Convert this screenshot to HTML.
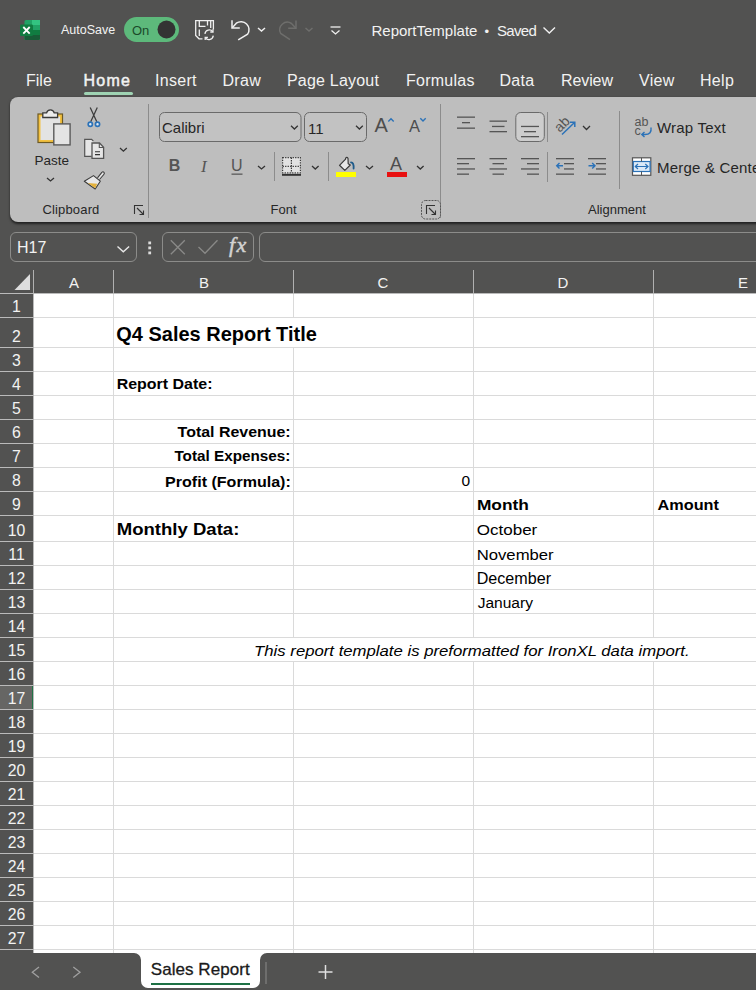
<!DOCTYPE html>
<html><head><meta charset="utf-8">
<style>
*{box-sizing:border-box;margin:0;padding:0}
html,body{width:756px;height:990px;overflow:hidden;background:#525251;font-family:"Liberation Sans",sans-serif}
.a{position:absolute;white-space:nowrap;line-height:1}
.w{color:#f2f2f2}
.k{color:#262626}
svg{position:absolute;overflow:visible}
#sheet{position:absolute;left:34px;top:294px;width:722px;height:659px;background:#fff}
.hl{position:absolute;height:1px;background:#dadada}
.vl{position:absolute;width:1px;background:#dadada}
.rh{position:absolute;left:0;width:33px;text-align:center;color:#f2f2f2;font-size:15px;line-height:1}
.rs{position:absolute;left:0;width:33px;height:1px;background:#bababa}
.c{position:absolute;white-space:nowrap;line-height:1;color:#000;font-size:15.2px;transform-origin:0 0}
.b{font-weight:bold}
</style></head><body>
<!-- TITLE BAR -->
<div id="title">
<svg style="left:0;top:0" width="756" height="60">
 <!-- excel icon -->
 <g>
  <rect x="24.5" y="20" width="15.5" height="20" rx="1.5" fill="#21a366"/>
  <rect x="32" y="20" width="8" height="5" fill="#33c481"/>
  <rect x="24.5" y="25" width="15.5" height="5" fill="#21a366"/>
  <rect x="24.5" y="30" width="15.5" height="5" fill="#107c41"/>
  <path d="M24.5 35 H40 V38.5 Q40 40 38.5 40 H26 Q24.5 40 24.5 38.5Z" fill="#185c37"/>
  <rect x="20" y="24.5" width="13" height="11.5" rx="1.3" fill="#107c41"/>
  <path d="M23.3 27 L29.7 33.6 M29.7 27 L23.3 33.6" stroke="#fff" stroke-width="1.8"/>
 </g>
 <!-- toggle -->
 <rect x="124" y="17" width="55" height="25" rx="12.5" fill="#5db97b"/>
 <circle cx="166.5" cy="29.5" r="9" fill="#333333"/>
 <!-- save icon -->
 <g fill="none" stroke="#f0f0f0" stroke-width="1.3">
  <path d="M202.5 38.8 H199 L195.7 35.5 V20.7 H213.4 V29.5"/>
  <path d="M199.3 20.7 V26.3 H205.5"/>
  <path d="M207.5 20.7 V25.5"/>
  <path d="M210.7 20.7 V28"/>
  <path d="M199.3 29.5 V36"/>
  <path d="M204.9 33.8 A4.5 4.5 0 0 1 212.8 31.6 M213.3 35.6 A4.5 4.5 0 0 1 205.4 37.9"/>
  <path d="M213 29.3 V32 H210.3 M205.2 40 V37.4 H207.9"/>
 </g>
 <!-- undo -->
 <g fill="none" stroke="#f0f0f0" stroke-width="1.5">
  <path d="M232 20.3 V28 H239.8"/>
  <path d="M232.3 27.8 L236.3 23.2 A8 8 0 0 1 247.6 34.2 L238.2 39.8"/>
  <path d="M258 28 L261.5 31 L265 28"/>
 </g>
 <!-- redo greyed -->
 <g fill="none" stroke="#6e6e6c" stroke-width="1.5">
  <path d="M296 20.5 V28.2 H288.2"/>
  <path d="M295.7 28 L291.5 23.5 A7.6 7.6 0 0 0 280.7 33.5 L290 39.6"/>
  <path d="M305.5 28 L309 31 L312.5 28"/>
 </g>
 <!-- customize -->
 <g fill="none" stroke="#f0f0f0" stroke-width="1.3">
  <path d="M330.5 27 H340.5"/>
  <path d="M331.5 30.5 L335.5 34 L339.5 30.5"/>
 </g>
 <!-- saved chevron -->
 <path d="M543.5 27.5 L549.3 33 L555 27.5" fill="none" stroke="#f0f0f0" stroke-width="1.4"/>
</svg>
<div class="a w" style="left:61px;top:24.3px;font-size:12.5px">AutoSave</div>
<div class="a" style="left:132px;top:24.2px;font-size:13px;color:#1b4a2a">On</div>
<div class="a w" style="left:371.5px;top:23.1px;font-size:15px">ReportTemplate</div>
<div class="a w" style="left:484.5px;top:25px;font-size:13px">&#8226;</div>
<div class="a w" style="left:497px;top:23.1px;font-size:15px;letter-spacing:-0.7px">Saved</div>
</div>
<!-- TABS -->
<div id="tabs">
<div class="a w" style="left:26px;top:72.9px;font-size:16px">File</div>
<div class="a w" style="left:83.6px;top:72.9px;font-size:16px;letter-spacing:1.2px;-webkit-text-stroke:0.5px #f2f2f2">Home</div>
<div class="a" style="left:84px;top:92px;width:49px;height:3px;border-radius:1.5px;background:#9fd3b3"></div>
<div class="a w" style="left:155px;top:72.9px;font-size:16px;letter-spacing:0.3px">Insert</div>
<div class="a w" style="left:222.5px;top:72.9px;font-size:16px;letter-spacing:0.3px">Draw</div>
<div class="a w" style="left:287px;top:72.9px;font-size:16px;letter-spacing:0.2px">Page Layout</div>
<div class="a w" style="left:406px;top:72.9px;font-size:16px;letter-spacing:0.25px">Formulas</div>
<div class="a w" style="left:499.5px;top:72.9px;font-size:16px;letter-spacing:0.25px">Data</div>
<div class="a w" style="left:561px;top:72.9px;font-size:16px;letter-spacing:-0.1px">Review</div>
<div class="a w" style="left:639px;top:72.9px;font-size:16px;letter-spacing:0.3px">View</div>
<div class="a w" style="left:700px;top:72.9px;font-size:16px;letter-spacing:0.3px">Help</div>
</div>
<!-- RIBBON -->
<div id="ribbon" style="position:absolute;left:10px;top:97px;width:800px;height:125px;background:#bebebe;border-radius:8px;box-shadow:0 1.5px 2.5px rgba(0,0,0,0.6)"></div>
<svg style="left:0;top:0" width="756" height="230">
 <!-- separators -->
 <g fill="#8c8c8c">
  <rect x="148" y="104" width="1" height="114"/>
  <rect x="440" y="104" width="1" height="114"/>
  <rect x="619" y="111" width="1" height="78"/>
  <rect x="274" y="152" width="1" height="29"/>
  <rect x="328" y="152" width="1" height="29"/>
  <rect x="547" y="112" width="1" height="30"/>
  <rect x="547" y="152" width="1" height="30"/>
 </g>
 <!-- paste -->
 <rect x="38" y="114" width="24.5" height="28.5" fill="#f3c140" stroke="#6e5a24" stroke-width="1.2"/>
 <rect x="40.5" y="116.5" width="19.5" height="23.5" fill="#e3e3e3"/>
 <path d="M42.8 117.5 V112.8 H46.6 A3.9 3.9 0 0 1 54.2 112.8 H57.6 V117.5 Z" fill="#ececec" stroke="#3a3a3a" stroke-width="1.3"/>
 <rect x="53.8" y="123.9" width="16.3" height="21" fill="#e4e4e4" stroke="#5a5a5a" stroke-width="1.4"/>
 <path d="M47 178 L50.5 181 L54 178" fill="none" stroke="#333" stroke-width="1.3"/>
 <!-- scissors -->
 <path d="M90.2 107.5 L96.8 121.8 M97.3 107.5 L90.7 121.8" stroke="#3c3c3c" stroke-width="1.25" fill="none"/>
 <circle cx="90.3" cy="124.3" r="2.1" fill="#dfe9f3" stroke="#2b72b8" stroke-width="1.7"/>
 <circle cx="97.5" cy="124.3" r="2.1" fill="#dfe9f3" stroke="#2b72b8" stroke-width="1.7"/>
 <!-- copy -->
 <path d="M91.5 156.3 H84.7 V139.3 H91.6 L93.4 141.2" fill="#e6e6e6" stroke="#555" stroke-width="1.2"/>
 <path d="M92 143 H99.5 L103.6 147.2 V158.3 H92 Z" fill="#e6e6e6" stroke="#555" stroke-width="1.3"/>
 <path d="M99.3 143 V147.5 H103.6" fill="none" stroke="#555" stroke-width="1.1"/>
 <path d="M95 151.8 H100 M95 154.6 H100" stroke="#333" stroke-width="1.1"/>
 <path d="M120 148 L123.4 151.2 L126.8 148" fill="none" stroke="#333" stroke-width="1.3"/>
 <!-- format painter -->
 <path d="M97.5 177.8 L101.8 172.3 Q103 171.3 104 172.3 Q104.8 173.3 103.8 174.5 L99.5 179.5" fill="#e6e6e6" stroke="#3c3c3c" stroke-width="1.1"/>
 <path d="M84.3 181.3 L93.5 175.6 L100.3 181.2 L95.2 189 Z" fill="#e8e8e8" stroke="#3c3c3c" stroke-width="1.1" stroke-linejoin="round"/>
 <path d="M87.8 183 L97.2 183.8 L95.2 188.2 Z" fill="#e3b13c"/>
 <!-- dialog launchers -->
 <g fill="none" stroke="#333" stroke-width="1.1">
  <path d="M134.5 214 V205.5 H143"/><path d="M137 208 L143.5 214.5 M143.5 210.5 V214.5 H139.5"/>
  <path d="M426.5 214 V205.5 H435"/><path d="M429 208 L435.5 214.5 M435.5 210.5 V214.5 H431.5"/>
 </g>
 <rect x="421.5" y="200.5" width="19" height="18.5" rx="4" fill="none" stroke="#555" stroke-width="1" stroke-dasharray="2 1"/>
 <!-- font name box -->
 <rect x="159.5" y="112.5" width="141.5" height="29" rx="5" fill="#c2c2c2" stroke="#6a6a6a" stroke-width="1"/>
 <path d="M291 125.8 L294.4 129 L297.8 125.8" fill="none" stroke="#333" stroke-width="1.3"/>
 <rect x="304.5" y="112.5" width="62" height="29" rx="5" fill="#c2c2c2" stroke="#6a6a6a" stroke-width="1"/>
 <path d="M356 125.8 L359.4 129 L362.8 125.8" fill="none" stroke="#333" stroke-width="1.3"/>
 <!-- grow/shrink carets -->
 <path d="M388.3 121.5 L391 118.8 L393.7 121.5" fill="none" stroke="#2b72b8" stroke-width="1.4"/>
 <path d="M420.3 118.3 L423 121 L425.7 118.3" fill="none" stroke="#2b72b8" stroke-width="1.4"/>
 <!-- underline chevrons -->
 <g fill="none" stroke="#333" stroke-width="1.3">
  <path d="M258 166 L261.5 169 L265 166"/>
  <path d="M312 166 L315.3 169 L318.6 166"/>
  <path d="M366 166 L369.5 169 L373 166"/>
  <path d="M417 166 L420.3 169 L423.6 166"/>
  <path d="M583 126 L586.5 129.5 L590 126"/>
 </g>
 <!-- underline U -->
 <rect x="231.5" y="173.5" width="11" height="1.3" fill="#5a5a5a"/>
 <!-- borders icon -->
 <rect x="282.5" y="157.5" width="18" height="15.5" fill="#e2e2e2"/>
 <g stroke="#3a3a3a" stroke-width="1.2" stroke-dasharray="1.3 1.2" fill="none">
  <rect x="282.6" y="157.6" width="17.8" height="15.2"/>
  <path d="M291.4 157.6 V172.8 M282.6 166.3 H300.4"/>
 </g>
 <rect x="282" y="174" width="19" height="1.8" fill="#333"/>
 <!-- fill color -->
 <path d="M339.5 165.3 L345.6 159.2 V158.3 Q346.8 156.4 348 158.3 L348.2 163.8 L350.3 165 L344.8 170.4 Z" fill="#e8e8e8" stroke="#3a3a3a" stroke-width="1.2" stroke-linejoin="round"/>
 <path d="M351 162.3 Q354 162.5 353.6 168.5" fill="none" stroke="#1f5b8a" stroke-width="1.8" stroke-linecap="round"/>
 <rect x="336" y="172" width="20" height="5" fill="#ffff00"/>
 <!-- font color bar -->
 <rect x="387" y="172" width="20" height="5" fill="#e81010"/>
 <!-- alignment lines -->
 <g fill="#555">
  <rect x="457" y="116.5" width="18" height="1.3"/><rect x="462" y="122" width="8" height="1.3"/><rect x="457" y="127.5" width="18" height="1.3"/>
  <rect x="489.5" y="120.5" width="17.5" height="1.3"/><rect x="492" y="125.8" width="12.5" height="1.3"/><rect x="489.5" y="131" width="17.5" height="1.3"/>
  <rect x="521" y="125.8" width="18" height="1.3"/><rect x="524" y="131" width="12" height="1.3"/><rect x="521" y="136" width="18" height="1.3"/>
  <rect x="457" y="158" width="18" height="1.3"/><rect x="457" y="163" width="12" height="1.3"/><rect x="457" y="168.3" width="18" height="1.3"/><rect x="457" y="173.5" width="12" height="1.3"/>
  <rect x="489.5" y="158" width="17.5" height="1.3"/><rect x="492.5" y="163" width="11.5" height="1.3"/><rect x="489.5" y="168.3" width="17.5" height="1.3"/><rect x="492.5" y="173.5" width="11.5" height="1.3"/>
  <rect x="521" y="158" width="18" height="1.3"/><rect x="527" y="163" width="12" height="1.3"/><rect x="521" y="168.3" width="18" height="1.3"/><rect x="527" y="173.5" width="12" height="1.3"/>
  <rect x="556" y="158" width="18" height="1.3"/><rect x="564" y="163" width="10" height="1.3"/><rect x="564" y="168.3" width="10" height="1.3"/><rect x="556" y="173.5" width="18" height="1.3"/>
  <rect x="588" y="158" width="18" height="1.3"/><rect x="596" y="163" width="10" height="1.3"/><rect x="596" y="168.3" width="10" height="1.3"/><rect x="588" y="173.5" width="18" height="1.3"/>
 </g>
 <rect x="515.8" y="112.5" width="28.5" height="29" rx="5" fill="#cdcdcd" stroke="#6a6a6a" stroke-width="1"/>
 <g fill="#555"><rect x="521" y="125.8" width="18" height="1.3"/><rect x="524" y="131" width="12" height="1.3"/><rect x="521" y="136" width="18" height="1.3"/></g>
 <!-- indent arrows -->
 <g fill="none" stroke="#2b72b8" stroke-width="1.4">
  <path d="M556.5 165.8 H563 M559.5 163 L556.7 165.8 L559.5 168.6"/>
  <path d="M588.5 165.8 H595 M592.2 163 L595 165.8 L592.2 168.6"/>
 </g>
 <!-- orientation -->
 <path d="M562 134.5 L574.5 122.5 M570 122.3 H574.8 V127" fill="none" stroke="#2b72b8" stroke-width="1.5"/>
 <!-- wrap text icon arrow -->
 <path d="M651 127.5 Q652 134.5 645 134.5 H642 M644.5 132 L641.8 134.5 L644.5 137" fill="none" stroke="#2b72b8" stroke-width="1.4"/>
 <!-- merge icon -->
 <rect x="632.5" y="157.8" width="18.3" height="17.5" fill="#ffffff" stroke="#555" stroke-width="1.2"/>
 <rect x="633.3" y="161.5" width="16.8" height="10" fill="#dbe9f7" stroke="#2b72b8" stroke-width="1.2"/>
 <path d="M641.5 157.8 V161.5 M641.5 171.5 V175.3" stroke="#555" stroke-width="1"/>
 <path d="M635.5 166.5 H647.8 M638 164 L635.3 166.5 L638 169 M645.3 164 L648 166.5 L645.3 169" fill="none" stroke="#2b72b8" stroke-width="1.2"/>
</svg>
<div class="a k" style="left:34.5px;top:154.2px;font-size:13.5px">Paste</div>
<div class="a k" style="left:42.5px;top:203px;font-size:13px;letter-spacing:0.15px">Clipboard</div>
<div class="a k" style="left:270.5px;top:203px;font-size:13px">Font</div>
<div class="a k" style="left:588px;top:203px;font-size:13px">Alignment</div>
<div class="a k" style="left:162px;top:119.6px;font-size:15px;letter-spacing:0px">Calibri</div>
<div class="a k" style="left:308px;top:120.5px;font-size:15px">11</div>
<div class="a k" style="left:657px;top:120.3px;font-size:15px;letter-spacing:0.2px">Wrap Text</div>
<div class="a k" style="left:657px;top:160.1px;font-size:15px;letter-spacing:0.2px">Merge &amp; Center</div>
<div class="a" style="left:168.8px;top:158px;font-size:16px;font-weight:bold;color:#555">B</div>
<div class="a" style="left:201px;top:157.5px;font-size:17px;font-style:italic;color:#555;font-family:'Liberation Serif'">I</div>
<div class="a" style="left:231px;top:157.5px;font-size:16px;color:#555">U</div>
<div class="a" style="left:374.5px;top:115px;font-size:20px;color:#4d4d4d">A</div>
<div class="a" style="left:409px;top:117.8px;font-size:16.5px;color:#4d4d4d">A</div>
<div class="a" style="left:390px;top:154.8px;font-size:18px;color:#4d4d4d">A</div>
<div class="a" style="left:553.5px;top:116.5px;font-size:14px;color:#555;transform:rotate(-45deg);transform-origin:50% 50%">ab</div>
<div class="a" style="left:634.5px;top:118px;font-size:12.5px;color:#555;line-height:0.75">ab<br>c</div>

<!-- FORMULA BAR -->
<div id="fbar">
<svg style="left:0;top:225px" width="756" height="45">
 <g fill="none" stroke="#8c8c8a" stroke-width="1">
  <rect x="10.5" y="7.5" width="126" height="29" rx="5.5"/>
  <rect x="162.5" y="7.5" width="91" height="29" rx="5.5"/>
  <rect x="259.5" y="7.5" width="520" height="29" rx="5.5"/>
 </g>
 <path d="M117.5 21.5 L123.3 26.8 L129.1 21.5" fill="none" stroke="#e8e8e8" stroke-width="1.4"/>
 <g fill="#dcdcdc"><rect x="148.3" y="16.5" width="2.8" height="2.8"/><rect x="148.3" y="21.5" width="2.8" height="2.8"/><rect x="148.3" y="26.5" width="2.8" height="2.8"/></g>
 <path d="M170.8 15.3 L184.8 29.3 M184.8 15.3 L170.8 29.3" stroke="#8a8a88" stroke-width="1.3"/>
 <path d="M198.5 22 L205 28.3 L217.5 15.3" fill="none" stroke="#8a8a88" stroke-width="1.3"/>
</svg>
<div class="a w" style="left:17px;top:239.5px;font-size:16px">H17</div>
<div class="a" style="left:229px;top:234px;font-size:22px;font-style:italic;font-family:'Liberation Serif',serif;color:#d2d2d2;letter-spacing:1.5px;-webkit-text-stroke:0.5px #d2d2d2">fx</div>
</div>
<!-- GRID -->
<div id="grid">
<div id="sheet"></div>
<div class="a" style="left:0;top:293px;width:756px;height:1px;background:#bababa"></div>
<div class="a" style="left:0;top:686px;width:33px;height:23px;background:#666664"></div>
<div class="a" style="left:32px;top:685px;width:2px;height:25px;background:#217346"></div>
<div class="hl" style="left:34px;top:317px;width:722px"></div>
<div class="rs" style="top:317px"></div>
<div class="hl" style="left:34px;top:347px;width:722px"></div>
<div class="rs" style="top:347px"></div>
<div class="hl" style="left:34px;top:371px;width:722px"></div>
<div class="rs" style="top:371px"></div>
<div class="hl" style="left:34px;top:395px;width:722px"></div>
<div class="rs" style="top:395px"></div>
<div class="hl" style="left:34px;top:419px;width:722px"></div>
<div class="rs" style="top:419px"></div>
<div class="hl" style="left:34px;top:443px;width:722px"></div>
<div class="rs" style="top:443px"></div>
<div class="hl" style="left:34px;top:467px;width:722px"></div>
<div class="rs" style="top:467px"></div>
<div class="hl" style="left:34px;top:491px;width:722px"></div>
<div class="rs" style="top:491px"></div>
<div class="hl" style="left:34px;top:515px;width:722px"></div>
<div class="rs" style="top:515px"></div>
<div class="hl" style="left:34px;top:541px;width:722px"></div>
<div class="rs" style="top:541px"></div>
<div class="hl" style="left:34px;top:565px;width:722px"></div>
<div class="rs" style="top:565px"></div>
<div class="hl" style="left:34px;top:589px;width:722px"></div>
<div class="rs" style="top:589px"></div>
<div class="hl" style="left:34px;top:613px;width:722px"></div>
<div class="rs" style="top:613px"></div>
<div class="hl" style="left:34px;top:637px;width:722px"></div>
<div class="rs" style="top:637px"></div>
<div class="hl" style="left:34px;top:661px;width:722px"></div>
<div class="rs" style="top:661px"></div>
<div class="hl" style="left:34px;top:685px;width:722px"></div>
<div class="rs" style="top:685px"></div>
<div class="hl" style="left:34px;top:709px;width:722px"></div>
<div class="rs" style="top:709px"></div>
<div class="hl" style="left:34px;top:733px;width:722px"></div>
<div class="rs" style="top:733px"></div>
<div class="hl" style="left:34px;top:757px;width:722px"></div>
<div class="rs" style="top:757px"></div>
<div class="hl" style="left:34px;top:781px;width:722px"></div>
<div class="rs" style="top:781px"></div>
<div class="hl" style="left:34px;top:805px;width:722px"></div>
<div class="rs" style="top:805px"></div>
<div class="hl" style="left:34px;top:829px;width:722px"></div>
<div class="rs" style="top:829px"></div>
<div class="hl" style="left:34px;top:853px;width:722px"></div>
<div class="rs" style="top:853px"></div>
<div class="hl" style="left:34px;top:877px;width:722px"></div>
<div class="rs" style="top:877px"></div>
<div class="hl" style="left:34px;top:901px;width:722px"></div>
<div class="rs" style="top:901px"></div>
<div class="hl" style="left:34px;top:925px;width:722px"></div>
<div class="rs" style="top:925px"></div>
<div class="hl" style="left:34px;top:949px;width:722px"></div>
<div class="rs" style="top:949px"></div>
<div class="vl" style="left:113px;top:294px;height:659px"></div>
<div class="vl" style="left:293px;top:294px;height:24px"></div><div class="vl" style="left:293px;top:347px;height:291px"></div>
<div class="vl" style="left:293px;top:661px;height:292px"></div>
<div class="vl" style="left:473px;top:294px;height:344px"></div>
<div class="vl" style="left:473px;top:661px;height:292px"></div>
<div class="vl" style="left:653px;top:294px;height:344px"></div>
<div class="vl" style="left:653px;top:661px;height:292px"></div>
<div class="a" style="left:33px;top:270px;width:1px;height:23px;background:#b0b0b0"></div>
<div class="a" style="left:113px;top:270px;width:1px;height:23px;background:#b0b0b0"></div>
<div class="a" style="left:293px;top:270px;width:1px;height:23px;background:#b0b0b0"></div>
<div class="a" style="left:473px;top:270px;width:1px;height:23px;background:#b0b0b0"></div>
<div class="a" style="left:653px;top:270px;width:1px;height:23px;background:#b0b0b0"></div>
<div class="a" style="left:33px;top:294px;width:1px;height:659px;background:#bababa"></div>
<div class="rh" style="top:299.1px;font-size:15.8px">1</div>
<div class="rh" style="top:329.1px;font-size:15.8px">2</div>
<div class="rh" style="top:353.1px;font-size:15.8px">3</div>
<div class="rh" style="top:377.1px;font-size:15.8px">4</div>
<div class="rh" style="top:401.1px;font-size:15.8px">5</div>
<div class="rh" style="top:425.1px;font-size:15.8px">6</div>
<div class="rh" style="top:449.1px;font-size:15.8px">7</div>
<div class="rh" style="top:473.1px;font-size:15.8px">8</div>
<div class="rh" style="top:497.1px;font-size:15.8px">9</div>
<div class="rh" style="top:523.1px;font-size:15.8px">10</div>
<div class="rh" style="top:547.1px;font-size:15.8px">11</div>
<div class="rh" style="top:571.1px;font-size:15.8px">12</div>
<div class="rh" style="top:595.1px;font-size:15.8px">13</div>
<div class="rh" style="top:619.1px;font-size:15.8px">14</div>
<div class="rh" style="top:643.1px;font-size:15.8px">15</div>
<div class="rh" style="top:667.1px;font-size:15.8px">16</div>
<div class="rh" style="top:691.1px;font-size:15.8px">17</div>
<div class="rh" style="top:715.1px;font-size:15.8px">18</div>
<div class="rh" style="top:739.1px;font-size:15.8px">19</div>
<div class="rh" style="top:763.1px;font-size:15.8px">20</div>
<div class="rh" style="top:787.1px;font-size:15.8px">21</div>
<div class="rh" style="top:811.1px;font-size:15.8px">22</div>
<div class="rh" style="top:835.1px;font-size:15.8px">23</div>
<div class="rh" style="top:859.1px;font-size:15.8px">24</div>
<div class="rh" style="top:883.1px;font-size:15.8px">25</div>
<div class="rh" style="top:907.1px;font-size:15.8px">26</div>
<div class="rh" style="top:931.1px;font-size:15.8px">27</div>
<div class="a w" style="left:34px;width:80px;text-align:center;top:274.9px;font-size:15px">A</div>
<div class="a w" style="left:164px;width:80px;text-align:center;top:274.9px;font-size:15px">B</div>
<div class="a w" style="left:343px;width:80px;text-align:center;top:274.9px;font-size:15px">C</div>
<div class="a w" style="left:523px;width:80px;text-align:center;top:274.9px;font-size:15px">D</div>
<div class="a w" style="left:703px;width:80px;text-align:center;top:274.9px;font-size:15px">E</div>
<svg style="left:0;top:270px" width="34" height="24"><path d="M14.5 20 L30 4 L30 20 Z" fill="#dedede"/></svg>

</div>
<!-- BOTTOM -->
<div id="cells">
<div class="c b" style="left:116.3px;top:324.1px;font-size:19.98px;transform:scaleY(0.976)">Q4 Sales Report Title</div>
<div class="c b" style="left:116.7px;top:377.4px;font-size:15.98px;transform:scaleY(0.901)">Report Date:</div>
<div class="c b" style="left:177.6px;top:425.4px;font-size:15.94px;transform:scaleY(0.903)">Total Revenue:</div>
<div class="c b" style="left:174.4px;top:448.9px;font-size:15.28px;transform:scaleY(0.942)">Total Expenses:</div>
<div class="c b" style="left:165.1px;top:473.5px;font-size:16.06px;transform:scaleY(0.897)">Profit (Formula):</div>
<div class="c b" style="left:476.9px;top:497.8px;font-size:17.34px;transform:scaleY(0.876)">Month</div>
<div class="c b" style="left:657.5px;top:496.9px;font-size:16.27px;transform:scaleY(0.934)">Amount</div>
<div class="c b" style="left:116.8px;top:521.2px;font-size:18.54px;transform:scaleY(0.906)">Monthly Data:</div>
<div class="c" style="left:476.7px;top:523.2px;font-size:17.04px;transform:scaleY(0.892)">October</div>
<div class="c" style="left:476.7px;top:547.7px;font-size:16.70px;transform:scaleY(0.910)">November</div>
<div class="c" style="left:476.7px;top:570.4px;font-size:16.13px;transform:scaleY(0.97)">December</div>
<div class="c" style="left:477.7px;top:594.8px;font-size:15.54px;transform:scaleY(0.978)">January</div>
<div class="c" style="left:254.1px;top:643.6px;font-size:16.73px;transform:scaleY(0.908);font-style:italic">This report template is preformatted for IronXL data import.</div>
<div class="c" style="left:461.5px;top:473.3px;font-size:15.5px">0</div>
</div>
<div id="bottom">
<div class="a" style="left:141px;top:950px;width:119px;height:38px;background:#fff;border-radius:0 0 7px 7px"></div>
<svg style="left:0;top:953px" width="756" height="37">
 <path d="M123 0 H134 A7 7 0 0 1 141 7 V0 Z" fill="#fff"/>
 <path d="M260 7 A7 7 0 0 1 267 0 H278 H260 Z" fill="#fff"/>
 <path d="M39 14 L32.3 19.3 L39 24.6" fill="none" stroke="#a0a0a0" stroke-width="1.3"/>
 <path d="M73.3 14 L80 19.3 L73.3 24.6" fill="none" stroke="#a0a0a0" stroke-width="1.3"/>
 <rect x="265.5" y="9" width="1" height="22" fill="#8a8a8a"/>
 <path d="M318.5 19 H332.5 M325.5 12 V26" stroke="#e0e0e0" stroke-width="1.5"/>
</svg>
<div class="a" style="left:150.8px;top:961.4px;font-size:17px;color:#1a1a1a;letter-spacing:0.05px;-webkit-text-stroke:0.3px #1a1a1a">Sales Report</div>
<div class="a" style="left:151px;top:983px;width:99px;height:2px;background:#1e7145"></div>
</div>
</body></html>
